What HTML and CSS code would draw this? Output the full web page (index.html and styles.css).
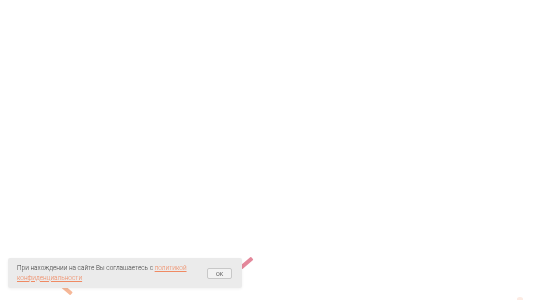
FILE: index.html
```html
<!DOCTYPE html>
<html lang="ru">
<head>
  <meta charset="UTF-8" />
  <meta name="viewport" content="width=device-width, initial-scale=1.0" />
  <title>Cookie</title>
  <link rel="stylesheet" href="styles.css">
</head>
<body>
  <div class="confetti pink"></div>
  <div class="confetti peach"></div>
  <div class="confetti faint"></div>

  <div class="cookie">
    <p class="cookie-text">При нахождении на сайте Вы соглашаетесь с <a href="#">политикой конфиденциальности</a></p>
    <button class="cookie-btn">OK</button>
  </div>
</body>
</html>
```

FILE: styles.css
```css
html, body {
  margin: 0;
  height: 100%;
  background: #fff;
  overflow: hidden;
}

body {
  font-family: Roboto, 'Open Sans', sans-serif;
  color: #3a3a3a;
}

.confetti {
  position: absolute;
  height: 4px;
  border-radius: 1px;
}

.confetti.pink {
  left: 239px;
  top: 261px;
  width: 15px;
  background: #e4889b;
  transform: rotate(-40deg);
}

.confetti.peach {
  left: 61px;
  top: 288px;
  width: 12px;
  background: #f6b898;
  transform: rotate(40deg);
}

.confetti.faint {
  left: 517px;
  top: 297px;
  width: 6px;
  height: 4px;
  background: #fcebe3;
  border-radius: 50% 50% 0 0;
}

.cookie {
  position: fixed;
  left: 8px;
  bottom: 12px;
  width: 234px;
  height: 30px;
  box-sizing: border-box;
  padding: 1px 10px 0 9px;
  display: flex;
  align-items: center;
  justify-content: space-between;
  background: #ebebeb;
  border-radius: 2px;
  box-shadow: 0 1px 3px rgba(0,0,0,0.06);
}

.cookie-text {
  margin: 0;
  width: 174px;
  font-size: 6.5px;
  line-height: 9.5px;
  font-weight: 300;
  color: #3a3a3a;
}

.cookie-text a {
  color: #f08a63;
  text-decoration: underline;
}

.cookie-btn {
  width: 25px;
  height: 11px;
  padding: 0;
  background: #f2f2f2;
  border: 1px solid #c8c8c8;
  border-radius: 2px;
  font-family: inherit;
  font-size: 5.5px;
  color: #555;
  cursor: pointer;
}
```
